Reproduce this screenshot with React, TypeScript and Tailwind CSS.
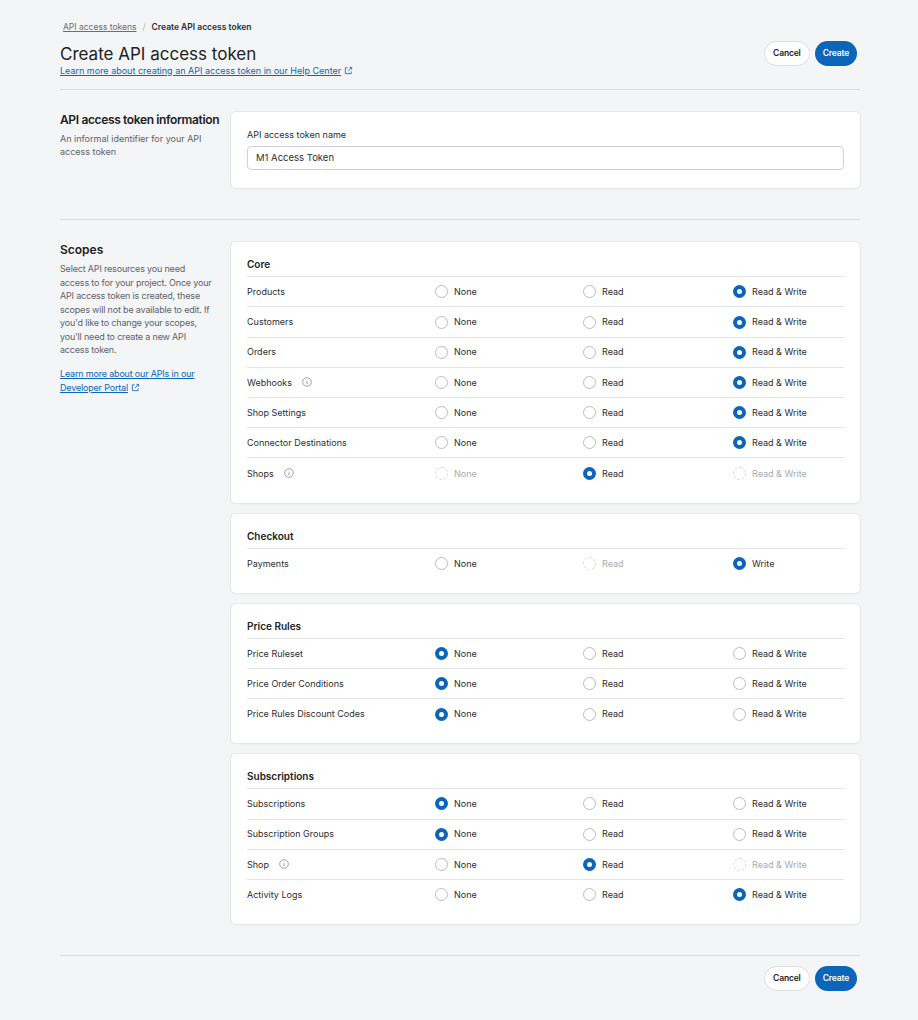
import React from "react"

type Opt = "on" | "off" | "dis"
type Row = { name: string; info?: boolean; opts: [Opt, Opt, Opt]; labels?: [string, string, string] }

const sections: { title: string; rows: Row[] }[] = [
  {
    title: "Core",
    rows: [
      { name: "Products", opts: ["off", "off", "on"] },
      { name: "Customers", opts: ["off", "off", "on"] },
      { name: "Orders", opts: ["off", "off", "on"] },
      { name: "Webhooks", info: true, opts: ["off", "off", "on"] },
      { name: "Shop Settings", opts: ["off", "off", "on"] },
      { name: "Connector Destinations", opts: ["off", "off", "on"] },
      { name: "Shops", info: true, opts: ["dis", "on", "dis"] },
    ],
  },
  {
    title: "Checkout",
    rows: [{ name: "Payments", opts: ["off", "dis", "on"], labels: ["None", "Read", "Write"] }],
  },
  {
    title: "Price Rules",
    rows: [
      { name: "Price Ruleset", opts: ["on", "off", "off"] },
      { name: "Price Order Conditions", opts: ["on", "off", "off"] },
      { name: "Price Rules Discount Codes", opts: ["on", "off", "off"] },
    ],
  },
  {
    title: "Subscriptions",
    rows: [
      { name: "Subscriptions", opts: ["on", "off", "off"] },
      { name: "Subscription Groups", opts: ["on", "off", "off"] },
      { name: "Shop", info: true, opts: ["off", "on", "dis"] },
      { name: "Activity Logs", opts: ["off", "off", "on"] },
    ],
  },
]

function Radio({ state, label }: { state: Opt; label: string }) {
  return (
    <div className="flex items-center gap-[6px]">
      {state === "on" ? (
        <span className="w-[13px] h-[13px] rounded-full bg-[#0b65b8] flex items-center justify-center">
          <span className="w-[5px] h-[5px] rounded-full bg-white" />
        </span>
      ) : state === "dis" ? (
        <span className="w-[13px] h-[13px] rounded-full border border-dashed border-[#d4d6da]" />
      ) : (
        <span className="w-[13px] h-[13px] rounded-full border border-[#b9bcc1] bg-white" />
      )}
      <span className={state === "dis" ? "text-[#a8abb0]" : "text-[#2b2d31]"}>{label}</span>
    </div>
  )
}

function Info() {
  return (
    <svg width="10" height="10" viewBox="0 0 10 10" className="ml-[10px] text-[#8a8d92]">
      <circle cx="5" cy="5" r="4.3" fill="none" stroke="currentColor" strokeWidth="0.8" />
      <path d="M5 4.3v3M5 2.6v.6" stroke="currentColor" strokeWidth="0.9" />
    </svg>
  )
}

function ExtIcon() {
  return (
    <svg width="9" height="9" viewBox="0 0 10 10" className="inline ml-[3px] -mt-[2px]">
      <path d="M4 2H1.5v6.5H8V6M6 1.5h2.5V4M8.5 1.5 4.5 5.5" fill="none" stroke="currentColor" strokeWidth="0.9" />
    </svg>
  )
}

function Buttons() {
  return (
    <div className="flex gap-[5px]">
      <button className="h-[25px] px-[8px] rounded-full bg-white border border-[#dcdee1] text-[8.5px] font-semibold tracking-[-0.02em] text-[#1f2023]">Cancel</button>
      <button className="h-[25px] px-[8px] rounded-full bg-[#0b65b8] text-[8.5px] font-semibold tracking-[-0.02em] text-white">Create</button>
    </div>
  )
}

export default function App() {
  return (
    <div className="min-h-screen bg-[#f4f5f7] px-[60px] pt-[21px] pb-[20px] text-[#2b2d31]" style={{ fontFamily: "Inter, 'Noto Sans', sans-serif" }}>
      <div className="w-[800px]">
        <div className="flex justify-between pr-[3px]">
          <div>
            <div className="text-[8.5px] flex gap-[6px] items-center">
              <span className="underline text-[#6b6e73] ml-[3px]">API access tokens</span>
              <span className="text-[#b0b3b8]">/</span>
              <span className="font-semibold text-[#2b2d31]">Create API access token</span>
            </div>
            <h1 className="text-[17px] mt-[9px] leading-[22px] text-[#202124]">Create API access token</h1>
            <a className="text-[9px] text-[#0b65b8] underline block leading-[12px]">Learn more about creating an API access token in our Help Center<ExtIcon /></a>
          </div>
          <div className="pt-[20px]"><Buttons /></div>
        </div>
        <div className="border-t border-[#d9dbde] mt-[12px]" />

        <div className="flex gap-[16px] pt-[22px] pb-[31px]">
          <div className="w-[155px]">
            <div className="text-[12px] font-semibold text-[#202124] leading-[16px] tracking-[-0.03em] whitespace-nowrap">API access token information</div>
            <div className="text-[9px] text-[#5f6267] leading-[13px] mt-[4px]">An informal identifier for your API access token</div>
          </div>
          <div className="flex-1 bg-white rounded-[5px] shadow-[0_0_0_1px_#e6e7ea,0_1px_2px_rgba(0,0,0,0.05)] px-[16px] pt-[16px] pb-[18px]">
            <div className="text-[9px] text-[#2b2d31]">API access token name</div>
            <div className="mt-[5px] h-[24px] rounded-[4px] border border-[#cfd1d5] flex items-center px-[8px] text-[9.5px]">M1 Access Token</div>
          </div>
        </div>
        <div className="border-t border-[#d9dbde]" />

        <div className="flex gap-[16px] pt-[22px] pb-[31px]">
          <div className="w-[155px]">
            <div className="text-[12px] font-semibold text-[#202124] leading-[16px]">Scopes</div>
            <div className="text-[9px] text-[#5f6267] leading-[13.5px] mt-[4px] tracking-[-0.02em]">
              Select API resources you need access to for your project. Once your API access token is created, these scopes will not be available to edit. If you'd like to change your scopes, you'll need to create a new API access token.
            </div>
            <a className="text-[9px] text-[#0b65b8] underline block leading-[14px] mt-[10px] tracking-[-0.02em]">Learn more about our APIs in our Developer Portal<ExtIcon /></a>
          </div>
          <div className="flex-1 flex flex-col gap-[11px]">
            {sections.map((s) => (
              <div key={s.title} className="bg-white rounded-[5px] shadow-[0_0_0_1px_#e6e7ea,0_1px_2px_rgba(0,0,0,0.05)] px-[16px] pt-[15px] pb-[14px]">
                <div className="text-[10px] font-semibold text-[#202124] pb-[4px] border-b border-[#e3e4e7]">{s.title}</div>
                {s.rows.map((r, i) => {
                  const labels = r.labels ?? ["None", "Read", "Read & Write"]
                  return (
                    <div key={r.name} className={`grid grid-cols-[188px_148px_150px_1fr] items-center h-[30.2px] text-[9px] ${i < s.rows.length - 1 ? "border-b border-[#e3e4e7]" : ""}`}>
                      <div className="flex items-center">{r.name}{r.info && <Info />}</div>
                      <Radio state={r.opts[0]} label={labels[0]} />
                      <Radio state={r.opts[1]} label={labels[1]} />
                      <Radio state={r.opts[2]} label={labels[2]} />
                    </div>
                  )
                })}
              </div>
            ))}
          </div>
        </div>
        <div className="border-t border-[#d9dbde]" />
        <div className="flex justify-end pt-[10px] pr-[3px]"><Buttons /></div>
      </div>
    </div>
  )
}
